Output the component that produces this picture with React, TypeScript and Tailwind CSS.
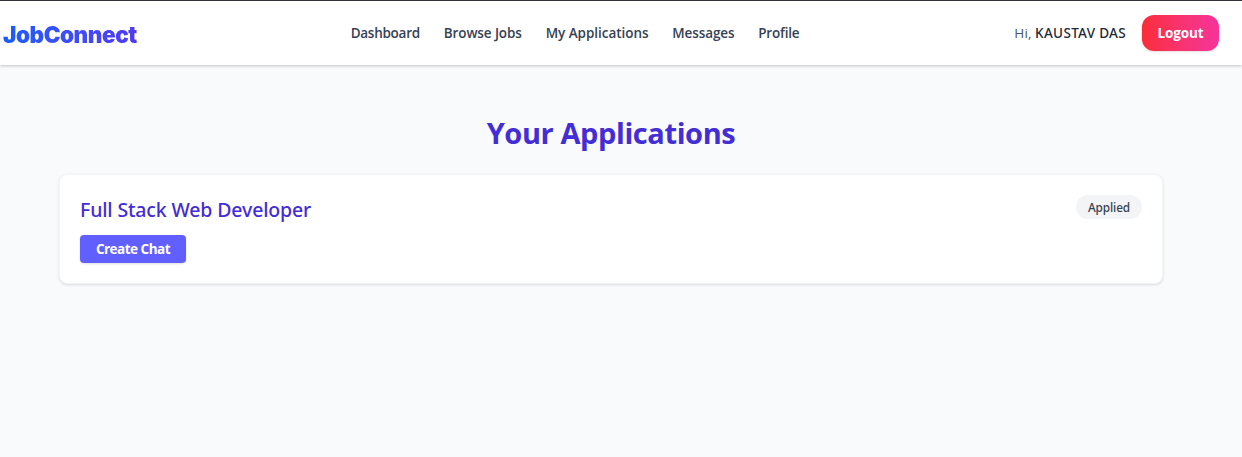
const links = [
  { label: "Dashboard", className: "w-[69px] tracking-[-0.27px]" },
  { label: "Browse Jobs", className: "w-[78px] tracking-[-0.09px]" },
  { label: "My Applications", className: "w-[102.5px] tracking-[-0.04px]" },
  { label: "Messages", className: "w-[62px] tracking-[-0.09px]" },
  { label: "Profile", className: "w-[42px] tracking-[-0.2px]" },
];

export default function App() {
  return (
    <div className="flex h-[457px] flex-col overflow-hidden bg-gray-50 font-['Open_Sans','Noto_Sans',sans-serif]">
      <header className="flex h-[65px] shrink-0 items-center border-t border-[#333238] bg-white pl-[3px] pr-[23px] shadow-[0_1px_3px_rgba(0,0,0,0.22)]">
        <div className="w-[347.7px] pt-1 font-[Inter,sans-serif] text-[22.5px] leading-8 font-black">
          <span className="bg-linear-to-r from-blue-600 to-indigo-600 bg-clip-text tracking-[-0.45px] text-transparent">JobConnect</span>
        </div>
        <nav className="flex gap-6 text-[13.5px] leading-5 font-semibold text-gray-700">
          {links.map((link) => (
            <a key={link.label} className={`whitespace-nowrap ${link.className}`}>{link.label}</a>
          ))}
        </nav>
        <div className="ml-auto flex items-center gap-4 text-[13.5px] leading-5">
          <span className="whitespace-nowrap text-gray-600"><span className="tracking-[0.1px]">Hi, </span><span className="font-['Noto_Sans',sans-serif] font-medium tracking-[0.32px] text-gray-800">KAUSTAV DAS</span></span>
          <button className="h-9 w-[77px] rounded-xl bg-linear-to-r from-red-500 to-pink-500 pb-px font-bold tracking-[-0.15px] text-white shadow-sm">Logout</button>
        </div>
      </header>
      <main className="flex flex-col pl-[59px] pr-[79px] pt-[50px]">
        <h1 className="text-center text-[29px] leading-9 font-bold tracking-[-0.4px] text-indigo-700">Your Applications</h1>
        <section className="mt-[23px] flex h-[110px] items-start justify-between rounded-lg border border-gray-100 bg-white p-5 shadow">
          <div className="flex flex-col items-start">
            <h2 className="pt-px font-['Noto_Sans',sans-serif] text-[19.5px] leading-7 font-medium tracking-[-0.14px] text-indigo-700">Full Stack Web Developer</h2>
            <button className="mt-[11px] h-7 w-[106px] rounded bg-indigo-500 text-[13.5px] leading-5 font-bold tracking-[-0.5px] text-white shadow-sm">Create Chat</button>
          </div>
          <span className="flex h-6 w-[66px] items-center justify-center rounded-full bg-gray-100 pt-px font-['Noto_Sans',sans-serif] text-[11.8px] font-medium tracking-[-0.1px] text-gray-700">Applied</span>
        </section>
      </main>
    </div>
  );
}
